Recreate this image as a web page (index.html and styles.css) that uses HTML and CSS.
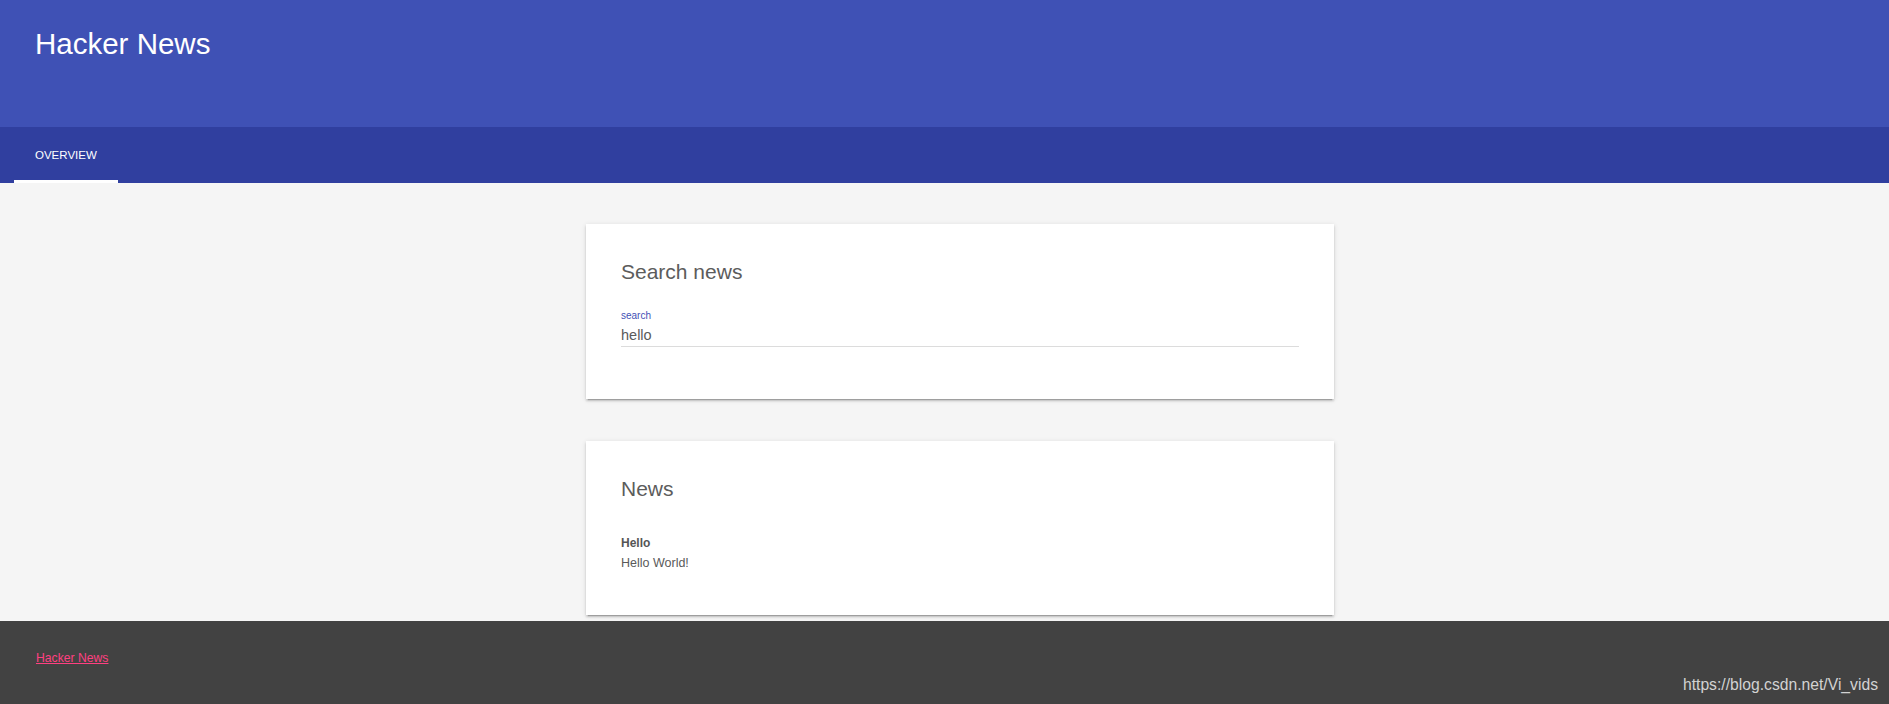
FILE: index.html
```html
<!DOCTYPE html>
<html>
<head>
<meta charset="utf-8">
<title>Hacker News</title>
<link rel="stylesheet" href="styles.css">
</head>
<body>
<header class="header">
  <div class="header-row">
    <span class="title">Hacker News</span>
  </div>
  <nav class="tabbar">
    <a class="tab is-active">OVERVIEW</a>
  </nav>
</header>
<main class="main">
  <section class="card card-search">
    <h2 class="card-title">Search news</h2>
    <div class="field">
      <label class="field-label">search</label>
      <div class="field-input">hello</div>
    </div>
  </section>
  <section class="card card-news">
    <h2 class="card-title">News</h2>
    <div class="news-item">
      <div class="news-title">Hello</div>
      <div class="news-body">Hello World!</div>
    </div>
  </section>
</main>
<footer class="footer">
  <a class="footer-link">Hacker News</a>
</footer>
<div class="watermark">https://blog.csdn.net/Vi_vids</div>
</body>
</html>
```
FILE: styles.css
```css
html, body {
  margin: 0;
  padding: 0;
}
body {
  font-family: "Liberation Sans", Arial, sans-serif;
  background: #f5f5f5;
  min-height: 100vh;
  display: flex;
  flex-direction: column;
  position: relative;
}
.header {
  background: #3f51b5;
  color: #fff;
}
.header-row {
  height: 127px;
  box-sizing: border-box;
  padding: 28px 0 0 35px;
}
.title {
  display: block;
  font-size: 29.5px;
  line-height: 32px;
  font-weight: normal;
}
.tabbar {
  background: #303f9f;
  height: 56px;
  display: flex;
  padding-left: 14px;
}
.tab {
  display: flex;
  align-items: center;
  box-sizing: border-box;
  height: 56px;
  padding: 2px 21px 0;
  font-size: 11.5px;
  color: #fff;
  border-bottom: 3px solid transparent;
}
.tab.is-active {
  border-bottom-color: #fff;
}
.main {
  display: flex;
  flex-direction: column;
  align-items: center;
  padding: 41px 0 6px 31px;
}
.card {
  width: 748px;
  box-sizing: border-box;
  background: #fff;
  padding: 36px 35px;
  box-shadow: 0 2px 2px 0 rgba(0,0,0,.14), 0 3px 1px -2px rgba(0,0,0,.2), 0 1px 5px 0 rgba(0,0,0,.12);
  color: #5a5a5a;
}
.card + .card {
  margin-top: 42px;
}
.card-title {
  margin: 0;
  font-size: 21px;
  line-height: 24px;
  font-weight: normal;
  color: #5c5c5c;
}
.field {
  margin: 26px 0 16px;
}
.field-label {
  display: block;
  font-size: 10px;
  line-height: 12px;
  color: #3f51b5;
}
.field-input {
  margin-top: 5px;
  font-size: 14.5px;
  line-height: 17px;
  padding-bottom: 2px;
  border-bottom: 1px solid #dcdcdc;
  color: #5a5a5a;
}
.news-item {
  margin: 32px 0 6px;
  font-size: 12.5px;
  line-height: 20px;
}
.news-title {
  font-weight: bold;
  font-size: 12px;
  color: #555;
}
.news-body {
  color: #5a5a5a;
}
.footer {
  flex: 1;
  background: #424242;
  padding: 27px 36px 0;
  min-height: 56px;
}
.footer-link {
  font-size: 12.2px;
  line-height: 14px;
  color: #ff4081;
  text-decoration: underline;
}
.watermark {
  position: absolute;
  right: 11px;
  bottom: 10px;
  font-size: 15.7px;
  line-height: 18px;
  color: #d2d2d2;
}
```
